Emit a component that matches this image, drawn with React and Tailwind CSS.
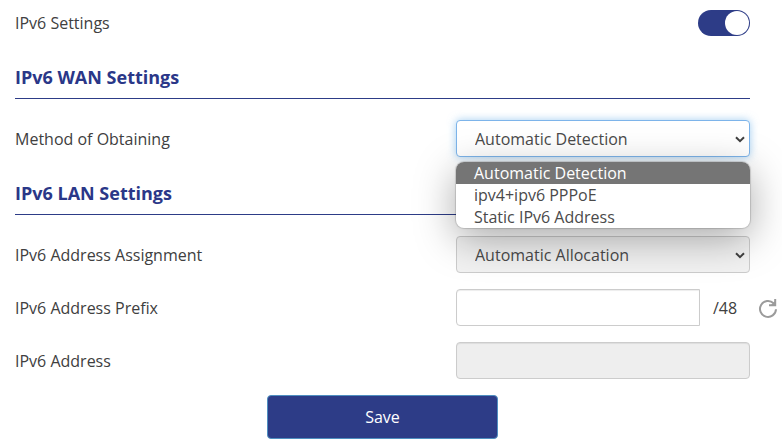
import { useState } from "react";

const methods = ["Automatic Detection", "ipv4+ipv6 PPPoE", "Static IPv6 Address"];

const fieldBase = "h-[37px] w-full border text-base text-[#4a4a4a] outline-none";

function Row({ id, label, children }) {
  return (
    <div className="flex h-[37px] items-center justify-between">
      <label htmlFor={id}>{label}</label>
      <div className="relative flex w-2/5 items-center justify-end">{children}</div>
    </div>
  );
}

function Section({ title, children }) {
  return (
    <section className="mt-6">
      <h2 className="border-b border-[#2d3c87] pb-[9px] text-lg leading-6 font-bold text-[#2a3788]">
        {title}
      </h2>
      <div className="mt-[21px] flex flex-col gap-4">{children}</div>
    </section>
  );
}

function SelectArrow() {
  return (
    <svg
      viewBox="0 0 10 8"
      className="pointer-events-none absolute right-[5px] h-2 w-2.5"
      fill="none"
      aria-hidden="true"
    >
      <path d="M1 2.2L5 6.2L9 2.2" stroke="#404040" strokeWidth="2" />
    </svg>
  );
}

function RefreshIcon() {
  return (
    <svg viewBox="0 0 20 20" className="size-5" fill="none" aria-hidden="true">
      <path d="M18 11.2A8 8 0 1 1 15.6 5.2" stroke="#9b9b9b" strokeWidth="2" />
      <path d="M17.2 1v6.2H11" stroke="#9b9b9b" strokeWidth="2" />
      <path d="M17.5 2.5v5h-5z" fill="#9b9b9b" />
    </svg>
  );
}

export default function App() {
  const [enabled, setEnabled] = useState(true);
  const [method, setMethod] = useState(methods[0]);

  return (
    <main className="bg-white pt-1 pr-8 pb-1 pl-[15px] font-['Open_Sans','Noto_Sans',sans-serif] text-base text-[#404040]">
      <Row id="ipv6" label="IPv6 Settings">
        <input
          id="ipv6"
          type="checkbox"
          role="switch"
          checked={enabled}
          onChange={(e) => setEnabled(e.target.checked)}
          className="h-[26px] w-[52px] appearance-none rounded-full bg-gray-400 p-px before:block before:size-6 before:rounded-full before:bg-white checked:bg-[#2d3c87] checked:before:ml-auto"
        />
      </Row>

      <Section title="IPv6 WAN Settings">
        <Row id="method" label="Method of Obtaining">
          <select
            id="method"
            value={method}
            onChange={(e) => setMethod(e.target.value)}
            className={`${fieldBase} appearance-none rounded border-[#7db4ea] bg-white pr-6 pl-[18px] shadow-[0_0_8px_rgba(102,175,233,0.6)]`}
          >
            {methods.map((m) => (
              <option key={m}>{m}</option>
            ))}
          </select>
          <SelectArrow />
          <ul
            role="listbox"
            aria-label="Method of Obtaining"
            className="absolute top-full left-0 z-10 mt-[5px] w-full overflow-hidden rounded-lg bg-white leading-[22px] text-[#4a4a4a] shadow-[0_0_1px_1px_rgba(0,0,0,0.15),0_10px_40px_rgba(0,0,0,0.35)]"
          >
            {methods.map((m) => (
              <li
                key={m}
                role="option"
                aria-selected={m === method}
                onClick={() => setMethod(m)}
                className="px-[18px] aria-selected:bg-[#757575] aria-selected:text-white"
              >
                {m}
              </li>
            ))}
          </ul>
        </Row>
      </Section>

      <Section title="IPv6 LAN Settings">
        <Row id="assignment" label="IPv6 Address Assignment">
          <select
            id="assignment"
            className={`${fieldBase} appearance-none rounded border-[#ccc] bg-[#f2f2f2] pr-6 pl-[18px]`}
          >
            <option>Automatic Allocation</option>
          </select>
          <SelectArrow />
        </Row>
        <Row id="prefix" label="IPv6 Address Prefix">
          <input
            id="prefix"
            type="text"
            className={`${fieldBase} min-w-0 flex-1 rounded-l border-[#ccc] bg-white px-3.5 shadow-[inset_0_1px_1px_rgba(0,0,0,0.075)]`}
          />
          <span className="w-[50px] text-center">/48</span>
          <button type="button" aria-label="Refresh prefix" className="-mr-7 ml-2 shrink-0">
            <RefreshIcon />
          </button>
        </Row>
        <Row id="address" label="IPv6 Address">
          <input
            id="address"
            type="text"
            disabled
            className={`${fieldBase} rounded border-[#ccc] bg-[#eee] px-3.5 shadow-[inset_0_1px_1px_rgba(0,0,0,0.075)]`}
          />
        </Row>
      </Section>

      <div className="mt-4 flex justify-center">
        <button
          type="button"
          className="h-11 w-[231px] rounded border border-[#4f8fc0] bg-[#2d3c87] text-white"
        >
          Save
        </button>
      </div>
    </main>
  );
}
